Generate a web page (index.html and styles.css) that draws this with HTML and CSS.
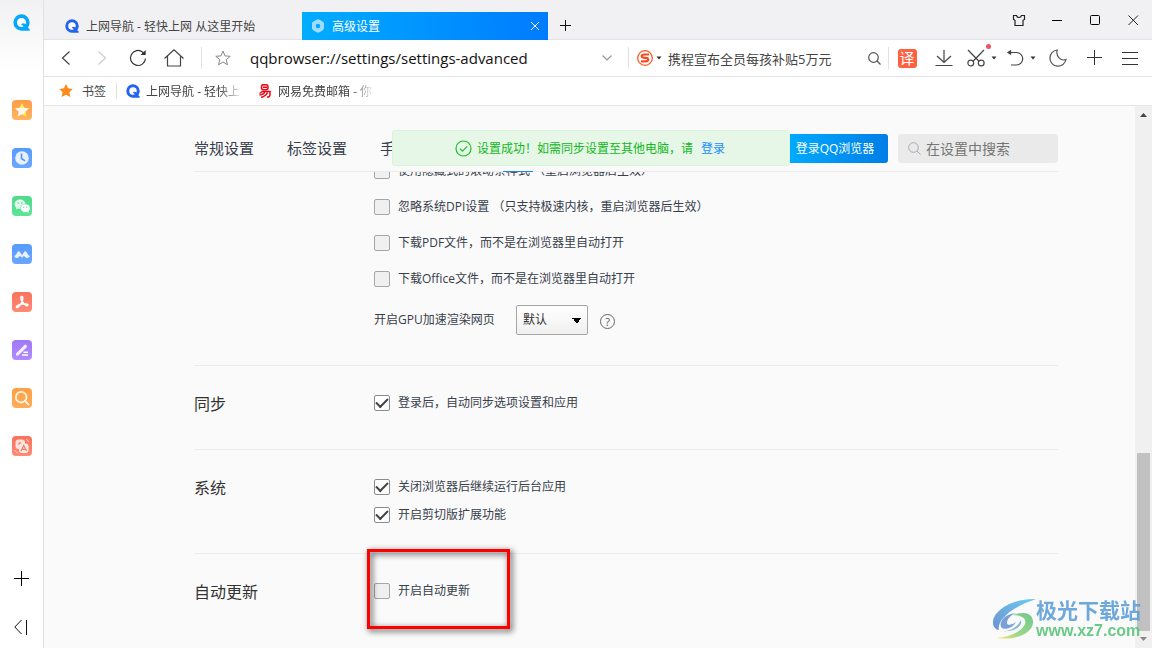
FILE: index.html
```html
<!DOCTYPE html>
<html lang="zh-CN">
<head>
<meta charset="utf-8">
<title>高级设置</title>
<link rel="stylesheet" href="styles.css">
</head>
<body>
<svg class="defs" aria-hidden="true">
  <symbol id="q-logo" viewBox="0 0 24 24">
    <path fill="currentColor" d="M12 0.500a11.500 11.500 0 0 1 11.500 11.500c0 2.800-1 5.200-2.400 7.200l2.400 2.300v2H12A11.500 11.500 0 0 1 12 .5z"/>
    <path fill="#fff" d="M12 5.500a6.400 6.400 0 0 1 6.400 6.400c0 1-.2 1.900-.6 2.700-1.600-1.700-3.800-1.900-5.600-.4-.8.700-.6 1.600.4 1.700 1 .1 1.700.3 2.300 1.500-.9.600-1.900.9-2.900.9a6.400 6.400 0 0 1 0-12.800z"/>
  </symbol>
  <symbol id="caret" viewBox="0 0 6 4"><path d="M0.500 0.500h5L3 3.500z" fill="#333"/></symbol>
</svg>
<div class="app">
  <aside class="sidebar">
    <a class="brand" href="#" aria-label="QQ浏览器"><svg width="17" height="17"><use href="#q-logo"/></svg></a>
    <nav class="dock" aria-label="侧边栏">
      <a href="#" class="dock-item orange" aria-label="收藏"><svg viewBox="0 0 20 20"><path d="M10 3.200l2.100 4.500 4.900.6-3.600 3.400.9 4.900L10 14.200l-4.300 2.400.9-4.900L3 8.300l4.900-.6z" fill="#fff" opacity=".9"/><path d="M10 3.200l2.100 4.500H9z" fill="#ff0"/><path d="M11 14.800l5-5.200-2.600 2.100.9 4.900z" fill="#fff200"/></svg></a>
      <a href="#" class="dock-item blue" aria-label="历史"><svg viewBox="0 0 20 20"><circle cx="10" cy="10" r="6.800" fill="#e6f0ff"/><path d="M9.500 5.500v5l3.500 2.300" fill="none" stroke="#4f93f5" stroke-width="1.600"/></svg></a>
      <a href="#" class="dock-item green" aria-label="微信"><svg viewBox="0 0 20 20"><path d="M8 3.500c3 0 5.300 1.800 5.500 4.200-3.300 0-5.600 2.200-5 5-1 .1-1.700 0-2.600-.3L4 13.600l.4-1.900C3.300 10.900 2.600 9.600 2.600 8.300 2.600 5.600 5 3.500 8 3.500z" fill="#e4fbee"/><ellipse cx="13.300" cy="12.200" rx="4.600" ry="4" fill="#fff"/><path d="M14.500 15.500l2.500 1.300-.5-2.300z" fill="#fff"/><g fill="#4bd888"><circle cx="6.200" cy="7" r=".8"/><circle cx="9.700" cy="7" r=".8"/><circle cx="11.800" cy="11.200" r=".6"/><circle cx="14.800" cy="11.200" r=".6"/></g></svg></a>
      <a href="#" class="dock-item blue" aria-label="会议"><svg viewBox="0 0 20 20"><path d="M2 12c1.500-.4 2.300-1.800 3.200-3.400.9-1.600 2.100-1.600 3-.2L10 11l1.800-2.600c.9-1.400 2.100-1.400 3 .2.900 1.600 1.700 3 3.200 3.400-1.400 2.300-3.600 2.500-4.900 1l-1.200-1.300-1 1.300c-.6.800-1.200.8-1.800 0l-1-1.300L6.900 13c-1.300 1.500-3.500 1.300-4.900-1z" fill="#fff" opacity=".85"/></svg></a>
      <a href="#" class="dock-item red" aria-label="PDF"><svg viewBox="0 0 20 20"><g fill="none" stroke="#fff" stroke-width="1.600" stroke-linecap="round"><path d="M9.500 4.500c1.800-.3 1.200 2.600.6 5.500-1 2-2.400 4-4.300 5.200-1.400.7-2-.8-.3-1.600 1.600-.9 3-1.400 4.800-1.700 2-.2 4-.2 5.300.6 1 .8-.5 1.600-2 .6-2.200-1.300-3.500-3-4.200-5-.5-1.600-.8-3.200.1-3.600z"/></g></svg></a>
      <a href="#" class="dock-item purple" aria-label="笔记"><svg viewBox="0 0 20 20"><path d="M4 13.400L12.200 5.200a1.600 1.600 0 0 1 2.400 2.300L6.500 15.200 4 15.700z" fill="#f3ecff"/><path d="M11.500 12.300h4.500M10 15h6" stroke="#fff" stroke-width="1.500"/></svg></a>
      <a href="#" class="dock-item amber" aria-label="搜索"><svg viewBox="0 0 20 20"><circle cx="9.200" cy="9.200" r="5.300" fill="none" stroke="#fff3e2" stroke-width="1.800"/><path d="M13 13l3.400 3.400" stroke="#fff3e2" stroke-width="2" stroke-linecap="round"/></svg></a>
      <a href="#" class="dock-item red" aria-label="翻译"><svg viewBox="0 0 20 20"><rect x="3.500" y="3.500" width="9.500" height="9.500" rx="3" fill="#fff" opacity=".75"/><path d="M6 8h4M8 6v5" stroke="#f97e66" stroke-width="1.200"/><rect x="7" y="7.500" width="9.500" height="9.500" rx="3" fill="#ffece8"/><path d="M9 15l2.700-5.500 2.800 5.500M10 13.400h3.500" fill="none" stroke="#f97e66" stroke-width="1.300"/><path d="M14 3.500c1.500.3 2.300 1 2.700 2.500M3 14c.4 1.500 1 2.200 2.500 2.700" fill="none" stroke="#ffd5cc"/></svg></a>
    </nav>
    <div class="dock-tools">
      <button aria-label="添加"><svg width="16" height="16"><path d="M7.500 1v15M0 8.500h15" stroke="#000"/></svg></button>
      <button aria-label="收起侧边栏"><svg width="16" height="16"><path d="M7.500 1L.8 8l6.700 7M12.500 1v15" fill="none" stroke="#111"/></svg></button>
    </div>
  </aside>

  <div class="window">
    <header class="tabstrip">
      <a class="tab" href="#"><svg class="logo-blue" width="14" height="14"><use href="#q-logo"/></svg><span>上网导航 - 轻快上网 从这里开始</span></a>
      <div class="tab active">
        <svg width="14" height="14" viewBox="0 0 14 14"><path d="M5.500.8a3 3 0 0 1 3 0l3 1.700A2.500 2.500 0 0 1 13 4.700v4.600a2.500 2.500 0 0 1-1.500 2.200l-3 1.700a3 3 0 0 1-3 0l-3-1.700A2.500 2.500 0 0 1 1 9.300V4.700a2.500 2.500 0 0 1 1.500-2.200zM7 4.700a2.300 2.300 0 1 0 0 4.600 2.300 2.300 0 0 0 0-4.600z" fill="#9fdcff"/></svg>
        <span>高级设置</span>
        <button class="tab-close" aria-label="关闭标签"><svg width="10" height="10"><path d="M1 1l8 8M9 1L1 9" stroke="#fff"/></svg></button>
      </div>
      <button class="new-tab" aria-label="新标签"><svg width="12" height="12"><path d="M5.500 0v11M0 5.500h11" stroke="#111"/></svg></button>
      <div class="window-buttons">
        <button aria-label="皮肤"><svg width="14" height="14"><path d="M1.500 2.500h3q.6 2 2.500 2t2.500-2h3v4l-1.500.8v5.200h-8V7.300l-1.500-.8z" fill="none" stroke="#222" stroke-width="1.200"/></svg></button>
        <button aria-label="最小化"><svg width="10" height="10"><path d="M0 5.500h10" stroke="#000"/></svg></button>
        <button aria-label="最大化"><svg width="11" height="11"><rect x=".5" y=".5" width="9" height="9" rx="1" fill="none" stroke="#000"/></svg></button>
        <button aria-label="关闭"><svg width="11" height="11"><path d="M.5.5l9.500 9.500M10 .5L.5 10" stroke="#222"/></svg></button>
      </div>
    </header>

    <div class="toolbar">
      <button class="tool" aria-label="后退"><svg width="16" height="16"><path d="M11.500 1.500L4.500 8l7 6.500" fill="none" stroke="#444" stroke-width="1.200"/></svg></button>
      <button class="tool" aria-label="前进"><svg width="16" height="16"><path d="M4.500 1.500l7 6.500-7 6.500" fill="none" stroke="#ccc" stroke-width="1.200"/></svg></button>
      <button class="tool" aria-label="刷新"><svg width="18" height="18"><path d="M16.500 9.500a7.500 7.500 0 1 1-2.700-6.300L16 5" fill="none" stroke="#333" stroke-width="1.200"/><path d="M16.700 1v5h-5.200z" fill="#333"/></svg></button>
      <button class="tool" aria-label="主页"><svg width="20" height="18"><path d="M.5 9.500L10 .8l9.500 8.700M3.500 7v10h13V7" fill="none" stroke="#444" stroke-width="1.200"/></svg></button>
      <i class="rule rule-nav"></i>
      <button class="tool narrow" aria-label="收藏"><svg width="16" height="16" viewBox="0 0 16 16"><path d="M8 1l2 4.900 5.200.4-4 3.400 1.300 5.100L8 12l-4.500 2.800 1.300-5.100-4-3.400L6 5.900z" fill="none" stroke="#888"/></svg></button>
      <input class="address" type="text" aria-label="地址栏" value="qqbrowser://settings/settings-advanced">
      <button class="tool narrow" aria-label="展开"><svg width="10" height="6"><path d="M.5.5L5 5 9.500.5" fill="none" stroke="#999" stroke-width="1.200"/></svg></button>
      <i class="rule rule-search"></i>
      <button class="tool engine" aria-label="搜狗"><svg width="16" height="16"><circle cx="8" cy="8" r="7.300" fill="none" stroke="#fd5a2b" stroke-width="1.300"/><path d="M12 4.500H7.200c-3.300 0-3.300 3.200 0 3.300h1.600c3.200.1 3.200 3.500 0 3.500H4" fill="none" stroke="#fa4a1e" stroke-width="2.200"/></svg><svg width="6" height="4"><use href="#caret"/></svg></button>
      <input class="search" type="text" aria-label="搜索" value="携程宣布全员每孩补贴5万元">
      <button class="tool narrow" aria-label="搜索"><svg width="13" height="13"><circle cx="5.500" cy="5.500" r="4.800" fill="none" stroke="#555" stroke-width="1.200"/><path d="M9 9l3.500 3.500" stroke="#555" stroke-width="1.200"/></svg></button>
      <i class="rule rule-tools"></i>
      <button class="tool" aria-label="翻译"><span class="translate">译</span></button>
      <button class="tool" aria-label="下载"><svg width="18" height="18"><path d="M9 1v12.500M2 7l7 6.500L16 7M.5 16.500h17" fill="none" stroke="#444" stroke-width="1.200"/></svg></button>
      <button class="tool wide" aria-label="截图"><svg width="18" height="18"><g fill="none" stroke="#444" stroke-width="1.200"><path d="M1 1l11.200 11.500M17 1L5.800 12.500"/><circle cx="3.800" cy="14" r="2.900"/><circle cx="14.200" cy="14" r="2.900"/></g></svg><svg width="6" height="4"><use href="#caret"/></svg><b class="dot"></b></button>
      <button class="tool wide" aria-label="撤销关闭"><svg width="18" height="18"><path d="M2 3.500h8.500a6 6 0 0 1 0 12.500H5" fill="none" stroke="#444" stroke-width="1.200"/><path d="M.8 3.500L5.200.7v5.600z" fill="#444"/></svg><svg width="6" height="4"><use href="#caret"/></svg></button>
      <button class="tool" aria-label="夜间模式"><svg width="18" height="18"><path d="M8.200 1A8.100 8.100 0 1 0 17 10.500C12 12.500 6.500 7.500 8.200 1z" fill="none" stroke="#555" stroke-width="1.200"/></svg></button>
      <button class="tool" aria-label="添加"><svg width="16" height="16"><path d="M8.500 0v15M1 7.500h15" stroke="#333"/></svg></button>
      <button class="tool" aria-label="菜单"><svg width="16" height="14"><path d="M0 1.500h16M0 7.500h16M0 13.500h16" stroke="#333"/></svg></button>
    </div>

    <nav class="bookmarks" aria-label="书签栏">
      <a href="#" class="bookmark"><svg width="14" height="14" viewBox="0 0 14 14"><path d="M7 0l2.100 4.300 4.700.6-3.400 3.300.9 4.800L7 10.700 2.700 13l.9-4.800L.2 4.900l4.700-.6z" fill="#ff8a1c"/></svg><span>书签</span></a>
      <i class="rule"></i>
      <a href="#" class="bookmark"><svg class="logo-blue" width="14" height="14"><use href="#q-logo"/></svg><span class="fade">上网导航 - 轻快上</span></a>
      <a href="#" class="bookmark"><svg width="14" height="14" viewBox="0 0 14 14"><g fill="none" stroke="#f00010" stroke-width="1.500"><rect x="3.500" y="0.700" width="6.500" height="5" rx="2"/><path d="M5 3.200h4M5 7l-3.500 2.500M3.500 7.500h8.500v3q0 3-3 2.500M7 7.500q-1 3-5.500 3.500M9.500 8.500Q8 12 3 13.500"/></g></svg><span class="fade">网易免费邮箱 - 你</span></a>
    </nav>

    <div class="viewport">
      <main class="page">
        <div class="settings">
          <header class="settings-head">
            <nav class="settings-tabs" aria-label="设置">
              <a href="#">常规设置</a><a href="#">标签设置</a><a href="#">手势快捷键</a><a href="#" class="current" aria-label="高级设置"></a>
            </nav>
            <button class="login">登录QQ浏览器</button>
            <label class="find"><svg width="13" height="13"><circle cx="5.500" cy="5.500" r="4.800" fill="none" stroke="#aaa"/><path d="M9 9l3.500 3.500" stroke="#aaa"/></svg><input type="search" aria-label="在设置中搜索" placeholder="在设置中搜索"></label>
            <div class="toast" role="status"><svg width="17" height="17"><circle cx="8.500" cy="8.500" r="7.500" fill="none" stroke="#1fbe28" stroke-width="1.200"/><path d="M5 8.800l2.500 2.400 4.700-4.900" fill="none" stroke="#1fbe28" stroke-width="1.200"/></svg><span>设置成功！如需同步设置至其他电脑，请</span><a href="#">登录</a></div>
          </header>

          <section class="group web">
            <h2></h2>
            <div class="options">
              <label><input type="checkbox">使用隐藏式的滚动条样式 （重启浏览器后生效）</label>
              <label><input type="checkbox">忽略系统DPI设置 （只支持极速内核，重启浏览器后生效）</label>
              <label><input type="checkbox">下载PDF文件，而不是在浏览器里自动打开</label>
              <label><input type="checkbox">下载Office文件，而不是在浏览器里自动打开</label>
              <div class="gpu">
                <label for="gpu">开启GPU加速渲染网页</label>
                <select id="gpu"><option>默认</option></select>
                <button class="help" aria-label="帮助">?</button>
              </div>
            </div>
          </section>
          <section class="group">
            <h2>同步</h2>
            <div class="options"><label><input type="checkbox" checked>登录后，自动同步选项设置和应用</label></div>
          </section>
          <section class="group">
            <h2>系统</h2>
            <div class="options">
              <label><input type="checkbox" checked>关闭浏览器后继续运行后台应用</label>
              <label><input type="checkbox" checked>开启剪切版扩展功能</label>
            </div>
          </section>
          <section class="group">
            <h2>自动更新</h2>
            <div class="options"><label><input type="checkbox">开启自动更新</label><div class="highlight"></div></div>
          </section>
        </div>
      </main>
      <div class="scrollbar">
        <svg width="17" height="17"><path d="M5 11h7L8.500 7z" fill="#444"/></svg>
        <div class="track"><div class="thumb"></div></div>
        <svg width="17" height="17"><path d="M5 6h7l-3.500 4z" fill="#888"/></svg>
      </div>
      <div class="watermark">
        <svg width="44" height="42" viewBox="0 0 44 42">
          <defs><linearGradient id="wm-blue" x1="1" y1="0" x2="0" y2="1"><stop offset="0" stop-color="#5cc8f0"/><stop offset="1" stop-color="#5f88cc"/></linearGradient><linearGradient id="wm-green" x1="1" y1="0" x2="0" y2="1"><stop offset="0" stop-color="#62c480"/><stop offset=".6" stop-color="#8fd480"/><stop offset="1" stop-color="#f2e45c"/></linearGradient></defs>
          <path d="M44 1C24 0 3 10 1 23c-.6 5 2 8 6 9C5 24 15 11 44 1z" fill="url(#wm-blue)"/>
          <path d="M24 15C12 16 7 24 9 29c3 4 12 1 15-5-4 3-9 4-9 1 0-4 4-8 9-10z" fill="#6c98d4"/>
          <path d="M20 17c12-4 20-2 21 6 1 11-16 20-36 17 14-1 25-7 28-14 2-6-4-9-13-9z" fill="url(#wm-green)"/>
          <path d="M8 33c9 1 17-3 21-11 2 5-5 13-21 11z" fill="#75b8ca"/>
        </svg>
        <div><strong>极光下载站</strong><span>www.xz7.com</span></div>
      </div>
    </div>
  </div>
</div>
</body>
</html>
```
FILE: styles.css
```css
* { box-sizing: border-box; }

body {
  margin: 0;
  font: 12px/18px "Open Sans", "Noto Sans CJK SC", sans-serif;
  color: #38404b;
  background: #fff;
}

a { color: inherit; text-decoration: none; }
button { border: 0; padding: 0; background: none; font: inherit; color: inherit; }
input { font: inherit; color: inherit; }
svg { display: block; flex: none; }
.defs { display: none; }

.app { display: flex; height: 100vh; overflow: hidden; }

/* Side dock */
.sidebar {
  display: flex;
  flex-direction: column;
  flex: none;
  width: 44px;
  padding-bottom: 1px;
  border-right: 1px solid #e1e1e3;
  background: linear-gradient(#f1f1f3, #fff 70px);
}
.brand { display: grid; place-items: center; height: 44px; color: #06a8ff; }
.dock { display: flex; flex-direction: column; gap: 28px; align-items: center; margin-top: 56px; }
.dock-item { width: 20px; height: 20px; border-radius: 4px; }
.orange { background: linear-gradient(#ff9d45, #ffb463); }
.amber { background: linear-gradient(#ff9f45, #ffac58); }
.blue { background: linear-gradient(#559bff, #6aa6ff); }
.green { background: linear-gradient(#4edc8b, #5be597); }
.red { background: linear-gradient(#f8725c, #ff8b75); }
.purple { background: linear-gradient(#9f78f8, #b08cff); }
.dock-tools { display: flex; flex-direction: column; gap: 9px; margin-top: auto; }
.dock-tools button { display: grid; place-items: center; height: 40px; }

.window { display: flex; flex-direction: column; flex: 1; min-width: 0; }

/* Tabs */
.tabstrip {
  display: flex;
  align-items: flex-end;
  flex: none;
  height: 40px;
  background: #f1f1f3;
  box-shadow: inset 0 -1px #e3e3e5;
}
.tab { display: flex; align-items: center; gap: 7px; width: 258px; height: 28px; padding-left: 21px; color: #444; }
.tab span { padding-top: 2px; }
.tab.active { width: 246px; padding: 0 8px 0 9px; color: #fff; background: linear-gradient(90deg, #00adff, #007bff); }
.logo-blue { color: #2264f0; }
.tab-close { margin-left: auto; }
.new-tab { display: grid; place-items: center; width: 35px; height: 28px; }
.window-buttons { display: flex; align-self: stretch; margin-left: auto; }
.window-buttons button { display: grid; place-items: center; width: 38px; }

/* Toolbar */
.toolbar {
  display: flex;
  align-items: center;
  flex: none;
  height: 37px;
  padding: 0 4px;
  border-bottom: 1px solid #e5e5e5;
}
.tool { display: flex; align-items: center; justify-content: center; flex: none; position: relative; width: 36px; height: 36px; }
.tool.narrow { width: 28px; }
.tool.wide { width: 39px; gap: 6px; }
.tool.engine { width: 26px; gap: 3px; }
.rule { flex: none; width: 1px; height: 22px; background: #e2e2e2; }
.rule-nav { margin: 0 7px 0 9px; }
.rule-search { margin: 0 7px; }
.rule-tools { margin-right: 1px; }
.address, .search { min-width: 0; height: 30px; border: 0; background: none; outline: 0; }
.address { flex: 1; padding: 0 0 0 13px; font-size: 15px; color: #111; }
.search { width: 198px; padding: 0 0 0 6px; font-size: 13px; color: #444; }
.translate { width: 19px; height: 19px; margin-right: 2px; border-radius: 3px; background: #ff6040; color: #fff; font-size: 15px; line-height: 18px; }
.dot { position: absolute; top: 4px; right: 10px; width: 5px; height: 5px; border-radius: 50%; background: #f5505c; }

/* Bookmarks */
.bookmarks {
  display: flex;
  align-items: center;
  flex: none;
  height: 29px;
  padding-left: 15px;
  border-bottom: 1px solid #e5e5e5;
  color: #444;
}
.bookmarks .rule { height: 16px; margin: 0 9px 0 10px; }
.bookmark { display: flex; align-items: center; gap: 6px; margin-right: 15px; }
.bookmark span { padding-top: 2px; }
.bookmark:first-child { gap: 9px; margin-right: 0; }
.fade { width: 97px; white-space: nowrap; mask-image: linear-gradient(90deg, #000 75%, transparent); }

/* Settings page */
.viewport { display: flex; flex: 1; min-height: 0; position: relative; background: #fafafa; }
.page { flex: 1; min-width: 0; padding-left: 73px; overflow: hidden; }
.settings { max-width: 864px; margin: 0 auto; }
.settings-head {
  display: flex;
  align-items: center;
  position: relative;
  z-index: 1;
  height: 66px;
  padding-top: 19px;
  border-bottom: 1px solid #ebebeb;
  background: #fafafa;
}
.settings-tabs { display: flex; gap: 33px; align-self: stretch; font-size: 15px; line-height: 46px; white-space: nowrap; }
.settings-tabs a { height: 47px; }
.settings-tabs .current { width: 60px; background: linear-gradient(#1a86e8, #1a86e8) bottom / 30px 1px no-repeat; }
.login {
  width: 106px;
  height: 29px;
  margin: 0 10px 0 auto;
  padding-top: 2px;
  border-radius: 3px;
  color: #fff;
  background: linear-gradient(90deg, #00adff, #007ee6);
}
.find { display: flex; align-items: center; gap: 5px; width: 160px; height: 29px; padding-left: 10px; border-radius: 4px; background: #eaeaea; }
.find input { width: 120px; padding: 2px 0 0; border: 0; background: none; outline: 0; font-size: 14px; }
.find input::placeholder { color: #757575; }
.toast {
  display: flex;
  align-items: center;
  justify-content: center;
  gap: 5px;
  position: absolute;
  top: 24px;
  left: 198px;
  width: 398px;
  height: 36px;
  padding-right: 2px;
  border: 1px solid #d9f3da;
  border-radius: 3px;
  color: #12b81c;
  background: #e6f7e8;
}
.toast span, .toast a { padding-top: 2px; }
.toast a { margin-left: 3px; color: #1a8cff; }

.group { display: flex; padding: 23px 0 24px; border-bottom: 1px solid #ebebeb; }
.group:last-child { border-bottom: 0; }
.group h2 { flex: none; width: 180px; margin: 0; padding-bottom: 6px; font-size: 16px; line-height: 30px; font-weight: 400; color: #333; }
.options { position: relative; }
.options > label { display: flex; align-items: center; gap: 8px; height: 28px; white-space: nowrap; }
.web { margin-top: -19px; padding: 0 0 22px; }
.web .options > label { height: 36px; }

input[type="checkbox"] {
  appearance: none;
  flex: none;
  width: 16px;
  height: 16px;
  margin: 0;
  border: 1px solid #a6a6a6;
  border-radius: 2px;
  background: #f0f0f0;
}
input[type="checkbox"]:checked { display: grid; place-items: center; border-color: #8c8c8c; background: #fff; }
input[type="checkbox"]:checked::before {
  content: "";
  width: 10px;
  height: 5px;
  margin-bottom: 4px;
  border: solid #444;
  border-width: 0 0 2px 2px;
  transform: rotate(-45deg);
}

.gpu { display: flex; align-items: center; height: 46px; }
.gpu label { width: 142px; white-space: nowrap; }
.gpu select {
  appearance: none;
  width: 72px;
  height: 30px;
  padding: 0 6px;
  border: 1px solid #a6a6a6;
  border-radius: 2px;
  font: inherit;
  color: #333;
  background:
    linear-gradient(to top right, transparent 50%, #000 50%) right 10px center / 5px 5px no-repeat,
    linear-gradient(to top left, transparent 50%, #000 50%) right 5px center / 5px 5px no-repeat,
    linear-gradient(#fff, #f0f0f0);
}
.help { width: 15px; height: 15px; margin: 2px 0 0 12px; border: 1px solid #666; border-radius: 50%; font-size: 11px; line-height: 13px; color: #555; }

/* Call-out frame around the update option */
.highlight {
  position: absolute;
  top: -28px;
  left: -7px;
  width: 143px;
  height: 80px;
  border: 3px solid #f00;
  filter: drop-shadow(2px 2px 3px rgba(0, 0, 0, .8));
  pointer-events: none;
}

.scrollbar { display: flex; flex-direction: column; flex: none; width: 17px; background: #f0f0f0; }
.track { display: flex; flex-direction: column; justify-content: flex-end; flex: 1; padding: 0 2px; }
.thumb { height: 35%; background: #c1c1c1; }

.watermark { display: flex; align-items: center; position: absolute; right: 11px; bottom: 8px; opacity: .9; }
.watermark div { display: flex; flex-direction: column; }
.watermark strong { font-size: 21px; line-height: 24px; color: #60a0d8; }
.watermark span { font: bold 16px/18px "Liberation Sans", sans-serif; color: #5cc47c; }
```
